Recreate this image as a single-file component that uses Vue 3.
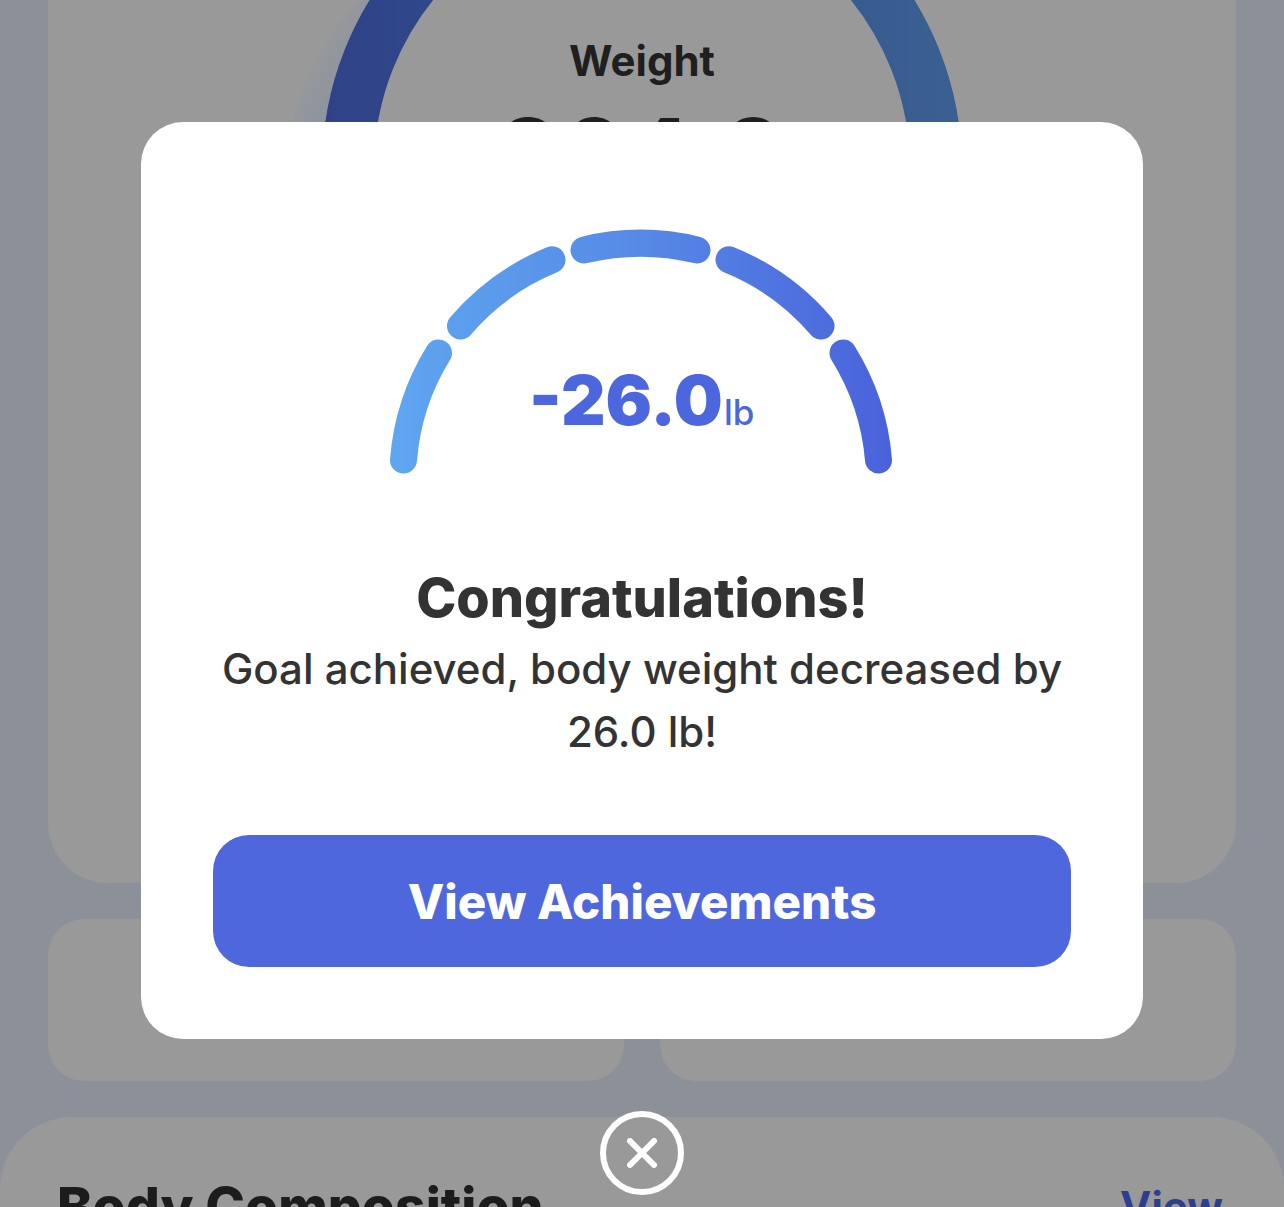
<script setup>
const segments = [
  'M403.5 460 A239 239 0 0 1 438.5 353',
  'M460.5 326 A239 239 0 0 1 552 259.8',
  'M584 250 A239 239 0 0 1 697 250',
  'M729 259.8 A239 239 0 0 1 821 326',
  'M843 353 A239 239 0 0 1 878.5 460'
]
</script>

<template>
  <div class="page">
    <div class="content">
      <section class="main-card">
        <svg class="ring" width="1188" height="883" viewBox="48 0 1188 883" aria-hidden="true">
          <defs>
            <linearGradient id="ringGrad" gradientUnits="userSpaceOnUse" x1="322" y1="0" x2="962" y2="0">
              <stop offset="0" stop-color="#2e4288" />
              <stop offset="1" stop-color="#3a6091" />
            </linearGradient>
            <linearGradient id="fadeGrad" gradientUnits="userSpaceOnUse" x1="296" y1="72" x2="346" y2="98">
              <stop offset="0" stop-color="#999999" />
              <stop offset="0.7" stop-color="#8f959f" />
              <stop offset="1" stop-color="#8f959f" />
            </linearGradient>
          </defs>
          <path d="M292 124 C306 66 330 28 362 -4 L384 -4 L340 124 Z" fill="url(#fadeGrad)" />
          <circle cx="642" cy="168" r="294" fill="none" stroke="url(#ringGrad)" stroke-width="52" />
        </svg>
        <div class="ring-label">
          <div class="weight-title">Weight</div>
          <div class="weight-value">264.0</div>
        </div>
      </section>

      <div class="tiles">
        <div class="tile"></div>
        <div class="tile"></div>
      </div>

      <section class="composition">
        <h2>Body Composition</h2>
        <span class="view-link">View</span>
      </section>
    </div>

    <div class="overlay">
      <div class="modal">
        <div class="gauge">
          <svg width="1002" height="260" viewBox="141 226 1002 260" aria-hidden="true">
            <defs>
              <linearGradient id="gaugeGrad" gradientUnits="userSpaceOnUse" x1="390" y1="0" x2="892" y2="0">
                <stop offset="0" stop-color="#5fa6f0" />
                <stop offset="0.5" stop-color="#5689e6" />
                <stop offset="1" stop-color="#4a62db" />
              </linearGradient>
            </defs>
            <path
              v-for="(d, i) in segments"
              :key="i"
              :d="d"
              fill="none"
              stroke="url(#gaugeGrad)"
              stroke-width="27"
              stroke-linecap="round"
            />
          </svg>
          <div class="gauge-value"><span class="num">-26.0</span><span class="unit">lb</span></div>
        </div>
        <h1>Congratulations!</h1>
        <p>Goal achieved, body weight decreased by<br />26.0 lb!</p>
        <button class="cta" type="button">View Achievements</button>
      </div>
      <button class="close" type="button" aria-label="Close">
        <svg width="30" height="30" viewBox="0 0 30 30" aria-hidden="true">
          <path d="M3 3 L27 27 M27 3 L3 27" fill="none" stroke="#ffffff" stroke-width="6" stroke-linecap="round" />
        </svg>
      </button>
    </div>
  </div>
</template>

<style>
html, body { margin: 0; padding: 0; background: #8b9099; }
</style>

<style scoped>
.page {
  position: relative;
  width: 1284px;
  height: 1207px;
  overflow: hidden;
  background: #8b9099;
  font-family: Inter, "Liberation Sans", sans-serif;
}
.content {
  display: flex;
  flex-direction: column;
  gap: 36px;
  padding: 0 48px;
}
.main-card {
  position: relative;
  height: 883px;
  background: #999999;
  border-radius: 0 0 60px 60px;
  overflow: hidden;
}
.ring { display: block; }
.ring-label {
  position: absolute;
  top: 34px;
  left: 0;
  right: 0;
  display: flex;
  flex-direction: column;
  align-items: center;
  color: #1f1f1f;
}
.weight-title {
  font-size: 42px;
  line-height: 54px;
  font-weight: 700;
}
.weight-value {
  font-size: 100px;
  line-height: 100px;
  margin-top: 17px;
  font-weight: 700;
}
.tiles {
  display: grid;
  grid-template-columns: 576px 576px;
  gap: 36px;
}
.tile {
  height: 162px;
  background: #999999;
  border-radius: 36px;
}
.composition {
  display: flex;
  justify-content: space-between;
  align-items: flex-start;
  height: 200px;
  margin: 0 -48px;
  padding: 60px 61px 0 57px;
  box-sizing: border-box;
  background: #999999;
  border-radius: 72px 72px 0 0;
}
.composition h2 {
  margin: 0;
  font-size: 53.5px;
  line-height: 60px;
  font-weight: 800;
  color: #1c1c1c;
}
.view-link {
  font-size: 42px;
  line-height: 60px;
  font-weight: 700;
  color: #2c3f8f;
}
.overlay {
  position: absolute;
  inset: 0;
  display: flex;
  flex-direction: column;
  align-items: center;
  padding-top: 122px;
}
.modal {
  width: 1002px;
  height: 917px;
  box-sizing: border-box;
  padding-top: 104px;
  background: #ffffff;
  border-radius: 42px;
  display: flex;
  flex-direction: column;
  align-items: center;
}
.gauge {
  position: relative;
  height: 260px;
}
.gauge svg { display: block; }
.gauge-value {
  position: absolute;
  left: 388px;
  top: 129px;
  display: flex;
  align-items: baseline;
  color: #4c66dd;
  white-space: nowrap;
}
.num {
  font-size: 69px;
  line-height: 90px;
  font-weight: 900;
}
.unit {
  font-size: 35px;
  font-weight: 500;
  margin-left: 1px;
}
h1 {
  margin: 80px 0 0;
  font-size: 54px;
  line-height: 64px;
  font-weight: 800;
  color: #333333;
}
p {
  margin: 7px 0 0;
  font-size: 42px;
  line-height: 63px;
  font-weight: 500;
  color: #333333;
  text-align: center;
}
.cta {
  width: 858px;
  height: 132px;
  margin-top: 72px;
  border: none;
  border-radius: 36px;
  background: #4f67dd;
  color: #ffffff;
  font-family: inherit;
  font-size: 47.5px;
  font-weight: 800;
  padding: 0;
}
.close {
  width: 84px;
  height: 84px;
  margin-top: 72px;
  box-sizing: border-box;
  border: 6px solid #ffffff;
  border-radius: 50%;
  background: transparent;
  padding: 0;
  display: flex;
  align-items: center;
  justify-content: center;
}
</style>
